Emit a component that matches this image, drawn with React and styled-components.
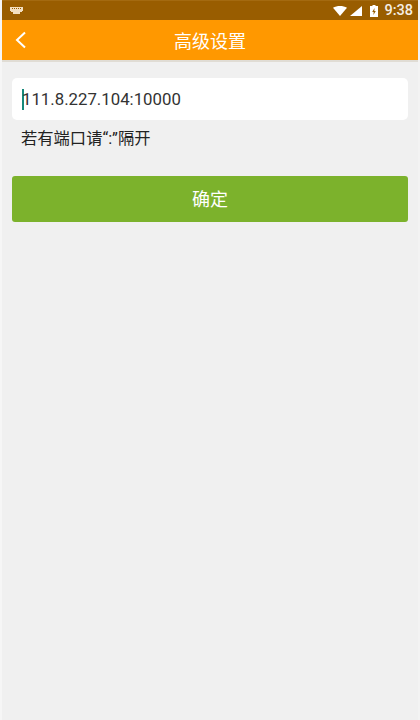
import React from "react";
import styled, { createGlobalStyle } from "styled-components";

const GlobalStyle = createGlobalStyle`
  html, body {
    margin: 0;
    padding: 0;
    background: #f0f0f0;
  }
  * {
    box-sizing: border-box;
  }
`;

const cjk = `Roboto, "Noto Sans CJK SC", sans-serif`;

const Page = styled.div`
  width: 420px;
  height: 720px;
  overflow: hidden;
  display: flex;
  flex-direction: column;
  font-family: ${cjk};
  background: #f0f0f0;
  border-left: 2px solid #f6f6f6;
  border-right: 2px solid #f3f3f3;
`;

const StatusBar = styled.div`
  height: 20px;
  margin: 0 -2px;
  padding: 0 7px 0 10px;
  display: flex;
  align-items: center;
  background: #995d00;
  border-top: 1px solid #a46a10;
  color: #fff;
`;

const StatusIcons = styled.div`
  margin-left: auto;
  display: flex;
  align-items: center;
  gap: 3px;
`;

const Clock = styled.span`
  margin-left: 3px;
  font-size: 14.500px;
  font-weight: 500;
  color: #f5eee2;
`;

const Header = styled.header`
  height: 42px;
  margin: 0 -2px;
  padding-bottom: 2px;
  display: grid;
  grid-template-columns: 44px 1fr 44px;
  align-items: center;
  background: #ff9800;
  border-bottom: 2px solid #e0dcd4;
  color: #fff;
`;

const BackButton = styled.button`
  height: 40px;
  padding: 0 0 0 15px;
  border: 0;
  background: none;
  display: flex;
  align-items: center;
`;

const Title = styled.h1`
  margin: 0;
  font-size: 18px;
  font-weight: 400;
  text-align: center;
`;

const Content = styled.main`
  padding: 16px 10px 0;
  display: flex;
  flex-direction: column;
`;

const AddressField = styled.div`
  height: 42px;
  padding-left: 10px;
  display: flex;
  align-items: center;
  background: #fff;
  border-radius: 5px;
  font-size: 16.800px;
  color: #333;
`;

const Caret = styled.span`
  width: 2px;
  height: 21px;
  margin-right: -2px;
  background: #15897a;
`;

const Hint = styled.p`
  margin: 7px 0 0;
  padding-left: 9px;
  font-size: 16.300px;
  line-height: 24px;
  color: #222;
`;

const ConfirmButton = styled.button`
  height: 46px;
  margin-top: 25px;
  padding-bottom: 4px;
  border: 0;
  border-radius: 3px;
  background: #7cb22c;
  color: #fff;
  font-family: ${cjk};
  font-size: 18px;
`;

const App = () => (
  <Page>
    <GlobalStyle />
    <StatusBar>
      <svg width="13" height="7" viewBox="0 0 13 7" fill="#f3dfc0">
        <path
          fillRule="evenodd"
          d="M0 0h13v4h-1v1h-2v2H3V5H1V4H0zM2 1v1h1V1zm2 0v1h1V1zm2 0v1h1V1zm2 0v1h1V1zm2 0v1h1V1z"
        />
      </svg>
      <StatusIcons>
        <svg width="14" height="10" viewBox="0 0 14 10" fill="#fff">
          <path d="M0 1.800C4-.6 10-.6 14 1.800L7 10z" />
        </svg>
        <svg width="12" height="10" viewBox="0 0 12 10" fill="#fff">
          <path d="M12 0v10H0z" />
        </svg>
        <svg width="8" height="12" viewBox="0 0 8 12" fill="#fff" style={{ marginLeft: 5 }}>
          <path
            fillRule="evenodd"
            d="M2.500 0h3v1H8v11H0V1h2.500zM4.600 3 2.200 7h1.500L3.400 10l2.400-4H4.300z"
          />
        </svg>
        <Clock>9:38</Clock>
      </StatusIcons>
    </StatusBar>
    <Header>
      <BackButton aria-label="back">
        <svg width="12" height="18" viewBox="0 0 12 18" fill="none" stroke="#fff" strokeWidth="2">
          <path d="M10 1.500 2 9l8 7.500" />
        </svg>
      </BackButton>
      <Title>高级设置</Title>
    </Header>
    <Content>
      <AddressField>
        <Caret />
        111.8.227.104:10000
      </AddressField>
      <Hint>若有端口请“:”隔开</Hint>
      <ConfirmButton>确定</ConfirmButton>
    </Content>
  </Page>
);

export default App;
